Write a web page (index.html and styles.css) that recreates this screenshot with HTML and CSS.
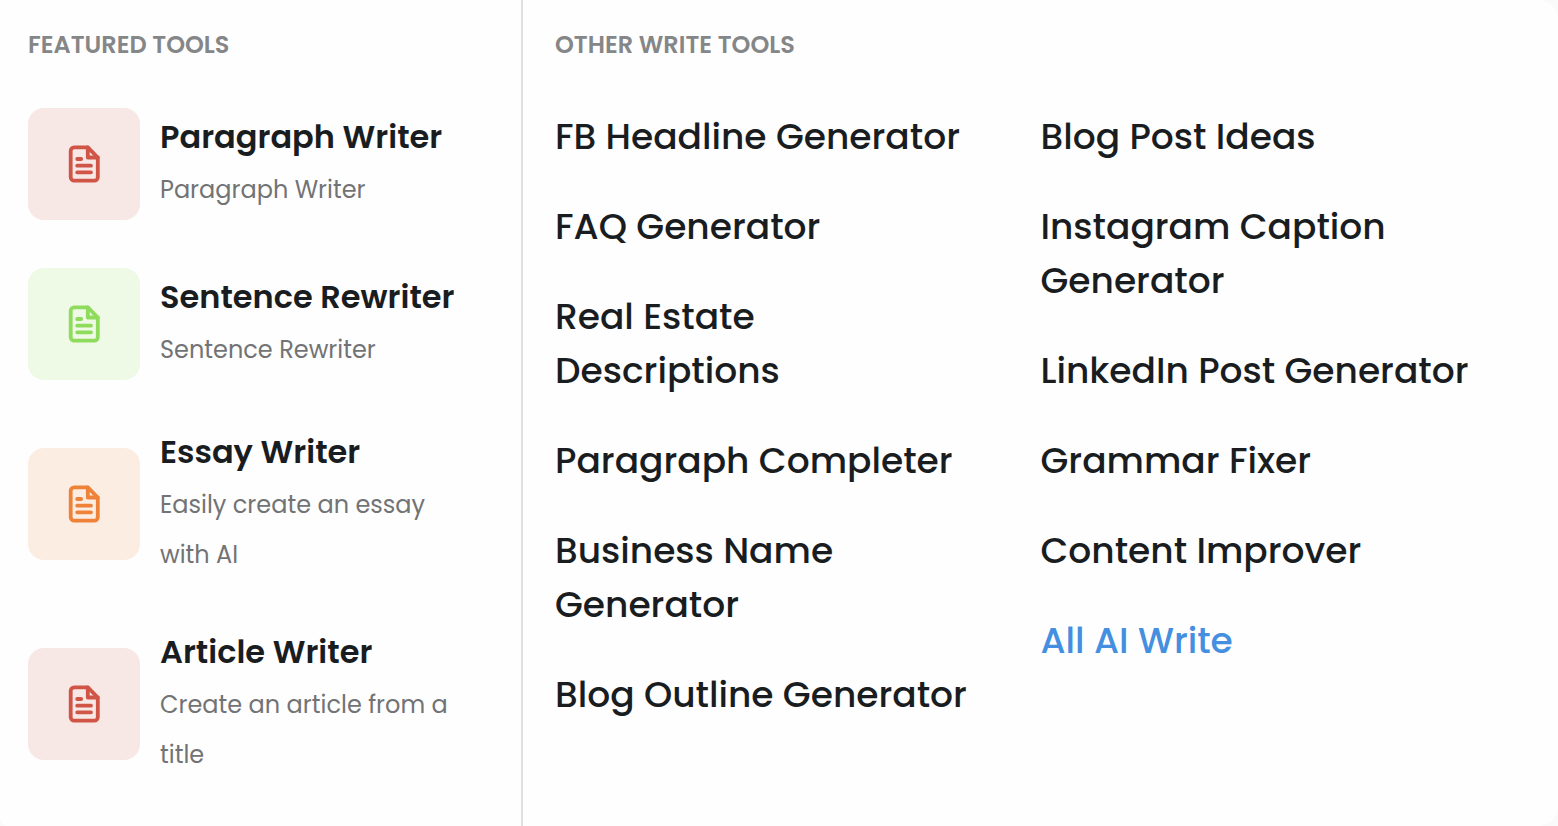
FILE: index.html
```html
<!DOCTYPE html>
<html lang="en">
<head>
    <meta charset="utf-8">
    <title>Write Tools</title>
    <meta name="viewport" content="width=device-width">
    <link rel="stylesheet" href="styles.css">
</head>
<body>
    <svg class="sprite" aria-hidden="true">
        <symbol id="doc" viewBox="0 0 40 40">
            <path d="M10.200 3.300H23.800L33.800 13.500V33.200a3.500 3.500 0 0 1-3.500 3.500H10.200a3.500 3.500 0 0 1-3.500-3.500V6.800a3.500 3.500 0 0 1 3.500-3.500z"/>
            <path d="M23.800 3.500v10h10M13.200 15h4M13.200 21.700h13.800M13.200 28.300h13.800"/>
        </symbol>
    </svg>
    <div class="mega-menu">
        <div class="featured">
            <h2 class="heading">FEATURED TOOLS</h2>
            <div class="tools">
                <a class="tool" href="#">
                    <span class="tile red"><svg class="icon"><use href="#doc"/></svg></span>
                    <span class="info">
                        <span class="name">Paragraph Writer</span>
                        <span class="desc">Paragraph Writer</span>
                    </span>
                </a>
                <a class="tool" href="#">
                    <span class="tile green"><svg class="icon"><use href="#doc"/></svg></span>
                    <span class="info">
                        <span class="name">Sentence Rewriter</span>
                        <span class="desc">Sentence Rewriter</span>
                    </span>
                </a>
                <a class="tool" href="#">
                    <span class="tile orange"><svg class="icon"><use href="#doc"/></svg></span>
                    <span class="info">
                        <span class="name">Essay Writer</span>
                        <span class="desc">Easily create an essay with AI</span>
                    </span>
                </a>
                <a class="tool" href="#">
                    <span class="tile red"><svg class="icon"><use href="#doc"/></svg></span>
                    <span class="info">
                        <span class="name">Article Writer</span>
                        <span class="desc">Create an article from a title</span>
                    </span>
                </a>
            </div>
        </div>
        <div class="others">
            <h2 class="heading">OTHER WRITE TOOLS</h2>
            <div class="columns">
                <div class="links">
                    <a href="#">FB Headline Generator</a>
                    <a href="#">FAQ Generator</a>
                    <a href="#">Real Estate Descriptions</a>
                    <a href="#">Paragraph Completer</a>
                    <a href="#">Business Name Generator</a>
                    <a href="#">Blog Outline Generator</a>
                </div>
                <div class="links">
                    <a href="#">Blog Post Ideas</a>
                    <a href="#">Instagram Caption Generator</a>
                    <a href="#">LinkedIn Post Generator</a>
                    <a href="#">Grammar Fixer</a>
                    <a href="#">Content Improver</a>
                    <a class="all" href="#">All AI Write</a>
                </div>
            </div>
        </div>
    </div>
</body>
</html>
```
FILE: styles.css
```css
* {
    box-sizing: border-box;
}
body {
    margin: 0;
    background: #fafafa;
    font-family: Poppins, Inter, "Open Sans", sans-serif;
    color: #1a1d1f;
}
a {
    color: inherit;
    text-decoration: none;
}
.sprite {
    display: none;
}
.mega-menu {
    display: grid;
    grid-template-columns: 523fr 1035fr;
    min-height: 100vh;
    background: #fefefe;
    border-radius: 0 20px 20px 8px;
}
.featured {
    padding: 28px 48px 40px 28px;
    border-right: 2px solid #e0e0e0;
}
.others {
    padding: 28px 32px 40px;
}
.heading {
    margin: 0;
    font-size: 24px;
    font-weight: 600;
    line-height: 34px;
    color: #858688;
}
.tools {
    display: flex;
    flex-direction: column;
    gap: 48px;
    margin-top: 46px;
}
.tool {
    display: flex;
    align-items: center;
    gap: 20px;
}
.tile {
    display: flex;
    flex: none;
    align-items: center;
    justify-content: center;
    width: 112px;
    height: 112px;
    border-radius: 16px;
}
.icon {
    width: 40px;
    height: 40px;
    fill: none;
    stroke: currentColor;
    stroke-width: 3.8;
    stroke-linecap: round;
    stroke-linejoin: round;
}
.red {
    background: #f7e7e5;
    color: #d15547;
}
.green {
    background: #eefae6;
    color: #8fdb5c;
}
.orange {
    background: #fcede2;
    color: #ef8239;
}
.name,
.desc {
    display: block;
}
.name {
    margin-bottom: 4px;
    font-size: 32px;
    font-weight: 600;
    line-height: 48px;
}
.desc {
    font-size: 24px;
    line-height: 50px;
    color: #727375;
}
.columns {
    display: grid;
    grid-template-columns: 1fr 1fr;
    margin-top: 48px;
}
.links {
    display: flex;
    flex-direction: column;
    gap: 36px;
    padding-right: 52px;
    font-size: 36px;
    font-weight: 500;
    line-height: 54px;
}
.all {
    color: #448fdf;
}
```
